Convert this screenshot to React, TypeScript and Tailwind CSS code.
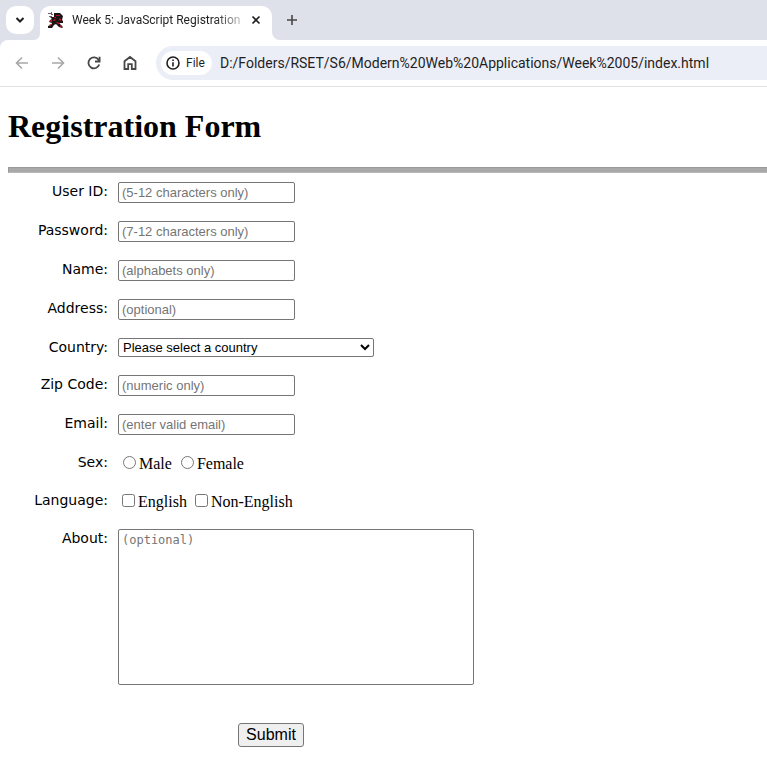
import type { ReactNode } from "react";

const inputClass =
  "block h-[21px] w-[177px] rounded-[2px] border border-[#767676] bg-white px-[3px] font-['Liberation_Sans',Arial,sans-serif] text-[13px] text-black placeholder:text-[#757575]";

function Favicon() {
  return (
    <svg viewBox="0 0 16 16" className="size-4 shrink-0" aria-hidden="true">
      <path d="M6 1h6l3 3-1 4 1 1v2l-4 0 2 2 2 2-1 1-3-1-3-3-2 1-2 3H0v-2l3-1 1-2-3-1 1-2 2-1-2-2 4 0z" fill="#1c1517" />
      <path d="M0 1h3v1H0zM3 2h2v1H3zM1 4h3v1H1zM3 0h1v2H3z" fill="#6f6265" />
      <path d="M8 3h4v1H8zM11 6l2 1v2l-2-1zM5 8l2-1 1 1-2 1zM2 8h2v2H2zM8 10l2 0 2 2h-2zM1 13l2-1v1l-1 1zM12 13l2 1v1h-2zM6 5h2v1H6z" fill="#b5121d" />
    </svg>
  );
}

function Browser() {
  return (
    <header className="bg-[#dee1e9] font-[Roboto,'Open_Sans',sans-serif] text-[#1f1f1f]">
      <div className="flex h-10 items-end">
        <button type="button" aria-label="Search tabs" className="mb-[6px] ml-[6px] flex size-7 items-center justify-center rounded-[10px] bg-white">
          <svg viewBox="0 0 10 10" className="size-[10px]" fill="none" stroke="currentColor" strokeWidth="2">
            <path d="M1.5 3l3.5 3.5L8.500 3" />
          </svg>
        </button>
        <svg viewBox="0 0 6 6" className="size-[6px]" fill="#fff" aria-hidden="true">
          <path d="M6 0v6H0a6 6 0 0 0 6-6" />
        </svg>
        <div className="flex h-[34px] w-[232px] items-center rounded-t-[10px] bg-white pb-[6px] pl-2">
          <Favicon />
          <span className="ml-2 w-[168px] bg-linear-to-r from-[#1f1f1f] from-85% to-[#1f1f1f]/30 bg-clip-text text-[12px] leading-4 whitespace-nowrap text-transparent">
            Week 5: JavaScript Registration
          </span>
          <button type="button" aria-label="Close tab" className="ml-[11px] flex size-[10px] items-center justify-center">
            <svg viewBox="0 0 10 10" className="size-[10px]" fill="none" stroke="currentColor" strokeWidth="1.600">
              <path d="M1.500 1.500l7 7M8.500 1.500l-7 7" />
            </svg>
          </button>
        </div>
        <svg viewBox="0 0 8 8" className="size-2" fill="#fff" aria-hidden="true">
          <path d="M0 0v8h8a8 8 0 0 1-8-8" />
        </svg>
        <button type="button" aria-label="New tab" className="mb-[14px] ml-[6px] flex size-3 items-center justify-center text-[#474747]">
          <svg viewBox="0 0 12 12" className="size-3" fill="none" stroke="currentColor" strokeWidth="1.600">
            <path d="M6 1v10M1 6h10" />
          </svg>
        </button>
      </div>
      <div className="flex h-[47px] items-center rounded-tl-[8px] border-b border-[#e0e0e0] bg-white pl-[14px] text-[#474747]">
        <button type="button" aria-label="Back" className="size-4 text-[#a8a8a8]">
          <svg viewBox="0 0 16 16" className="size-4" fill="none" stroke="currentColor" strokeWidth="1.600">
            <path d="M14 8H3M8 2.500L2.500 8 8 13.500" />
          </svg>
        </button>
        <button type="button" aria-label="Forward" className="ml-5 size-4 text-[#a8a8a8]">
          <svg viewBox="0 0 16 16" className="size-4" fill="none" stroke="currentColor" strokeWidth="1.600">
            <path d="M2 8h11M8 2.500L13.500 8 8 13.500" />
          </svg>
        </button>
        <button type="button" aria-label="Reload" className="ml-5 size-4">
          <svg viewBox="0 0 16 16" className="size-4" fill="none" stroke="currentColor" strokeWidth="1.800">
            <path d="M13.200 9.500A5.500 5.500 0 1 1 12.500 4.800L13 5.600M13.600 1.800v4.700H9" />
          </svg>
        </button>
        <button type="button" aria-label="Home" className="ml-5 size-4">
          <svg viewBox="0 0 16 16" className="size-4" fill="none" stroke="currentColor" strokeWidth="1.800">
            <path d="M2.500 14V6.200L8 2l5.500 4.200V14H9.800V9.200H6.200V14z" />
          </svg>
        </button>
        <div className="ml-[18px] flex h-[34px] flex-1 items-center rounded-l-full bg-[#ebeef7] pl-[5px] text-[#1f1f1f]">
          <button type="button" className="flex h-6 w-[51px] items-center gap-[6px] rounded-full bg-white pl-[5px] text-[12px]">
            <svg viewBox="0 0 14 14" className="size-[14px] shrink-0" fill="none" stroke="currentColor" strokeWidth="1.600">
              <circle cx="7" cy="7" r="6" />
              <path d="M7 6.200V10.400M7 3.600V5.100" />
            </svg>
            File
          </button>
          <input
            aria-label="Address and search bar"
            readOnly
            value="D:/Folders/RSET/S6/Modern%20Web%20Applications/Week%2005/index.html"
            className="ml-2 min-w-0 flex-1 text-[14px] leading-5"
          />
        </div>
      </div>
    </header>
  );
}

function Row({ label, htmlFor, children }: { label: string; htmlFor?: string; children: ReactNode }) {
  const text = "w-[100px] shrink-0 text-right font-['DejaVu_Sans',Verdana,sans-serif] text-[14px] leading-[18px]";
  return (
    <div className="flex gap-[10px]">
      {htmlFor ? (
        <label htmlFor={htmlFor} className={text}>{label}</label>
      ) : (
        <span className={text}>{label}</span>
      )}
      {children}
    </div>
  );
}

const fields = [
  { id: "userid", label: "User ID:", type: "text", hint: "(5-12 characters only)" },
  { id: "password", label: "Password:", type: "password", hint: "(7-12 characters only)" },
  { id: "name", label: "Name:", type: "text", hint: "(alphabets only)" },
  { id: "address", label: "Address:", type: "text", hint: "(optional)" },
];

const contactFields = [
  { id: "zip", label: "Zip Code:", type: "text", hint: "(numeric only)" },
  { id: "email", label: "Email:", type: "email", hint: "(enter valid email)" },
];

function Field({ id, label, type, hint }: { id: string; label: string; type: string; hint: string }) {
  return (
    <Row label={label} htmlFor={id}>
      <input id={id} name={id} type={type} placeholder={hint} className={inputClass} />
    </Row>
  );
}

function Choice({ type, name, label }: { type: "radio" | "checkbox"; name: string; label: string }) {
  return (
    <label className="flex gap-[3px]">
      <input type={type} name={name} className="mt-[3px] size-[13px]" />
      <span className="pt-[2px] leading-[18px]">{label}</span>
    </label>
  );
}

export default function App() {
  return (
    <div className="min-h-screen bg-white text-black">
      <Browser />
      <main className="pt-[21px] pb-[18px] pl-2 font-['Liberation_Serif','Times_New_Roman',serif] text-[16px]">
        <h1 className="text-[32px] leading-[37px] font-bold">Registration Form</h1>
        <hr className="mt-[22px] mb-[9px] h-[6px] border border-r-0 border-[#9a9a9a] border-b-[#b8b8b8] bg-[#a9a9a9]" />
        <form className="flex flex-col gap-[18px]" onSubmit={(e) => e.preventDefault()}>
          {fields.map((f) => (
            <Field key={f.id} {...f} />
          ))}
          <Row label="Country:" htmlFor="country">
            <select
              id="country"
              name="country"
              className="h-[19px] w-64 rounded-[2px] border border-[#767676] bg-white font-['Liberation_Sans',Arial,sans-serif] text-[13px] leading-4"
            >
              <option>Please select a country</option>
            </select>
          </Row>
          {contactFields.map((f) => (
            <Field key={f.id} {...f} />
          ))}
          <Row label="Sex:">
            <div role="radiogroup" aria-label="Sex" className="flex h-5 gap-[9px] pl-[5px]">
              <Choice type="radio" name="sex" label="Male" />
              <Choice type="radio" name="sex" label="Female" />
            </div>
          </Row>
          <Row label="Language:">
            <div role="group" aria-label="Language" className="flex h-5 gap-2 pl-1">
              <Choice type="checkbox" name="english" label="English" />
              <Choice type="checkbox" name="non-english" label="Non-English" />
            </div>
          </Row>
          <Row label="About:" htmlFor="about">
            <textarea
              id="about"
              name="about"
              placeholder="(optional)"
              className="h-[156px] w-[356px] resize-none rounded-[2px] border border-[#767676] bg-white px-[3px] py-[2px] font-['DejaVu_Sans_Mono',Consolas,monospace] text-[12px] leading-4 placeholder:text-[#757575]"
            />
          </Row>
          <button
            type="submit"
            className="mt-5 ml-[230px] h-6 w-[66px] rounded-[3px] border border-[#767676] bg-[#efefef] font-['Liberation_Sans',Arial,sans-serif] text-[16px] leading-5"
          >
            Submit
          </button>
        </form>
      </main>
    </div>
  );
}
